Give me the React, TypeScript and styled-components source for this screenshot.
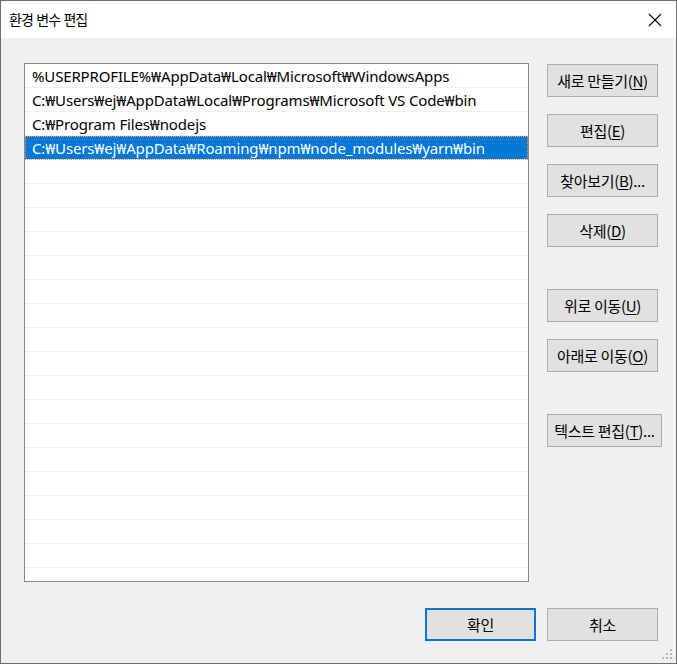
import React from "react";
import styled, { createGlobalStyle } from "styled-components";

const Global = createGlobalStyle`
  html, body { margin: 0; padding: 0; background: #f0f0f0; }
  body { font-family: "Noto Sans", "Noto Sans CJK KR", sans-serif; }
  * { box-sizing: border-box; }
`;

const Window = styled.div`
  width: 677px;
  height: 664px;
  border: 1px solid #6d6d6d;
  background: #f0f0f0;
  display: flex;
  flex-direction: column;
  position: relative;
  font-family: "Noto Sans", "Noto Sans CJK KR", sans-serif;
  font-size: 15px;
  color: #000;
`;

const TitleBar = styled.div`
  height: 37px;
  background: #fff;
  display: flex;
  align-items: center;
  justify-content: space-between;
  padding: 0 14px 0 8px;
  flex-shrink: 0;
`;

const Title = styled.span`
  font-family: "Noto Sans CJK KR", sans-serif;
  font-size: 14px;
  letter-spacing: -0.9px;
  word-spacing: 1px;
  margin-top: -2px;
`;

const Body = styled.div`
  display: flex;
  padding: 25px 0 0 23px;
`;

const List = styled.div`
  width: 505px;
  height: 519px;
  border: 1px solid #828790;
  background: #fff;
  overflow: hidden;
`;

const Row = styled.div<{ $selected?: boolean }>`
  height: 24px;
  border-bottom: 1px solid #f0f0f0;
  display: flex;
  align-items: center;
  padding-left: 7px;
  white-space: nowrap;
  font-size: 15px;
  letter-spacing: -0.15px;
  background: ${(p) => (p.$selected ? "#0078d7" : "transparent")};
  color: ${(p) => (p.$selected ? "#fff" : "#000")};
  outline: ${(p) => (p.$selected ? "1px dotted #f0a050" : "none")};
  outline-offset: -1px;
`;

const ButtonColumn = styled.div`
  display: flex;
  flex-direction: column;
  margin-left: 18px;
  padding-top: 1px;
`;

const Button = styled.div<{ $gap?: number; $width?: number; $primary?: boolean }>`
  width: ${(p) => p.$width ?? 111}px;
  height: 33px;
  margin-top: ${(p) => p.$gap ?? 0}px;
  background: #e1e1e1;
  border: ${(p) => (p.$primary ? "2px solid #0078d7" : "1px solid #adadad")};
  display: flex;
  align-items: center;
  justify-content: center;
  font-family: "Noto Sans CJK KR", sans-serif;
  font-size: 15px;
  letter-spacing: -0.3px;
  white-space: nowrap;
`;

const Key = styled.span`
  text-decoration: underline;
  text-underline-offset: 2px;
`;

const Footer = styled.div`
  display: flex;
  justify-content: flex-end;
  gap: 11px;
  padding: 26px 18px 0 0;
`;

const Grip = styled.svg`
  position: absolute;
  right: 2px;
  bottom: 2px;
`;

const rows = [
  "%USERPROFILE%₩AppData₩Local₩Microsoft₩WindowsApps",
  "C:₩Users₩ej₩AppData₩Local₩Programs₩Microsoft VS Code₩bin",
  "C:₩Program Files₩nodejs",
  "C:₩Users₩ej₩AppData₩Roaming₩npm₩node_modules₩yarn₩bin",
];

export default function App() {
  const all = [...rows, ...Array(18).fill("")];
  return (
    <>
      <Global />
      <Window>
        <TitleBar>
          <Title>환경 변수 편집</Title>
          <svg width="14" height="14" viewBox="0 0 14 14">
            <path d="M1 1 L13 13 M13 1 L1 13" stroke="#000" strokeWidth="1.1" />
          </svg>
        </TitleBar>
        <Body>
          <List>
            {all.map((t, i) => (
              <Row key={i} $selected={i === 3}>
                {t}
              </Row>
            ))}
          </List>
          <ButtonColumn>
            <Button>
              새로 만들기(<Key>N</Key>)
            </Button>
            <Button $gap={17}>
              편집(<Key>E</Key>)
            </Button>
            <Button $gap={17}>
              찾아보기(<Key>B</Key>)...
            </Button>
            <Button $gap={17}>
              삭제(<Key>D</Key>)
            </Button>
            <Button $gap={42}>
              위로 이동(<Key>U</Key>)
            </Button>
            <Button $gap={17}>
              아래로 이동(<Key>O</Key>)
            </Button>
            <Button $gap={42} $width={115}>
              텍스트 편집(<Key>T</Key>)...
            </Button>
          </ButtonColumn>
        </Body>
        <Footer>
          <Button $primary>확인</Button>
          <Button>취소</Button>
        </Footer>
        <Grip width="12" height="12" viewBox="0 0 12 12">
          <g fill="#b8b8b8">
            <rect x="8" y="0" width="2" height="2" />
            <rect x="4" y="4" width="2" height="2" />
            <rect x="8" y="4" width="2" height="2" />
            <rect x="0" y="8" width="2" height="2" />
            <rect x="4" y="8" width="2" height="2" />
            <rect x="8" y="8" width="2" height="2" />
          </g>
        </Grip>
      </Window>
    </>
  );
}
